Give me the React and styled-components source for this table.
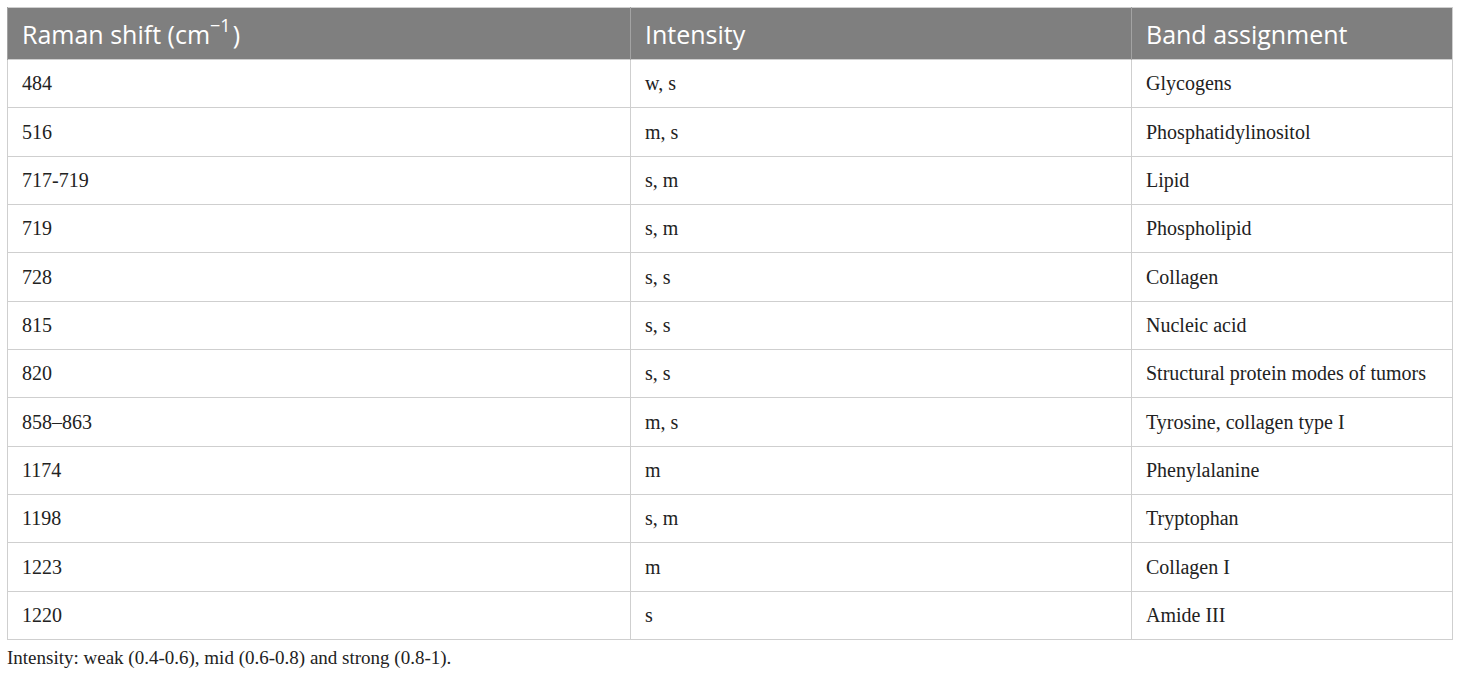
import React from 'react';
import styled, { createGlobalStyle } from "styled-components";

const GlobalStyle = createGlobalStyle`
body {
  margin: 0;
  background: #fff;
}
`

const rows = [
  ["484", "w, s", "Glycogens"],
  ["516", "m, s", "Phosphatidylinositol"],
  ["717-719", "s, m", "Lipid"],
  ["719", "s, m", "Phospholipid"],
  ["728", "s, s", "Collagen"],
  ["815", "s, s", "Nucleic acid"],
  ["820", "s, s", "Structural protein modes of tumors"],
  ["858–863", "m, s", "Tyrosine, collagen type I"],
  ["1174", "m", "Phenylalanine"],
  ["1198", "s, m", "Tryptophan"],
  ["1223", "m", "Collagen I"],
  ["1220", "s", "Amide III"],
];

function App() {
  return (
    <Wrapper>
      <GlobalStyle />
      <Table>
        <colgroup>
          <col style={{ width: 623 }} />
          <col style={{ width: 501 }} />
          <col />
        </colgroup>
        <thead>
          <tr>
            <Th>Raman shift (cm<sup>−1</sup>)</Th>
            <Th>Intensity</Th>
            <Th>Band assignment</Th>
          </tr>
        </thead>
        <tbody>
          {rows.map((r, i) => (
            <tr key={i}>
              {r.map((c, j) => <Td key={j}>{c}</Td>)}
            </tr>
          ))}
        </tbody>
      </Table>
      <Note>Intensity: weak (0.4-0.6), mid (0.6-0.8) and strong (0.8-1).</Note>
    </Wrapper>
  );
}

export default App;

const Wrapper = styled.div`
  padding: 7px 8px 0 7px;
`

const Table = styled.table`
  width: 1446px;
  border-collapse: collapse;
  table-layout: fixed;
  border: 1px solid #cfcfcf;
`

const Th = styled.th`
  background: #7f7f7f;
  color: #fff;
  font-family: "Open Sans", sans-serif;
  font-weight: 400;
  font-size: 25px;
  text-align: left;
  height: 51px;
  padding: 0 14px;
  border-left: 1px solid #a3a3a3;
  sup {
    font-size: 18px;
    line-height: 0;
    position: relative;
    top: -2px;
    padding-right: 2px;
  }
`

const Td = styled.td`
  font-family: "Liberation Serif", serif;
  font-size: 20px;
  color: #222;
  height: 47.35px;
  padding: 0 14px;
  border: 1px solid #cfcfcf;
`

const Note = styled.div`
  font-family: "Liberation Serif", serif;
  font-size: 19px;
  color: #222;
  margin-top: 7px;
`
